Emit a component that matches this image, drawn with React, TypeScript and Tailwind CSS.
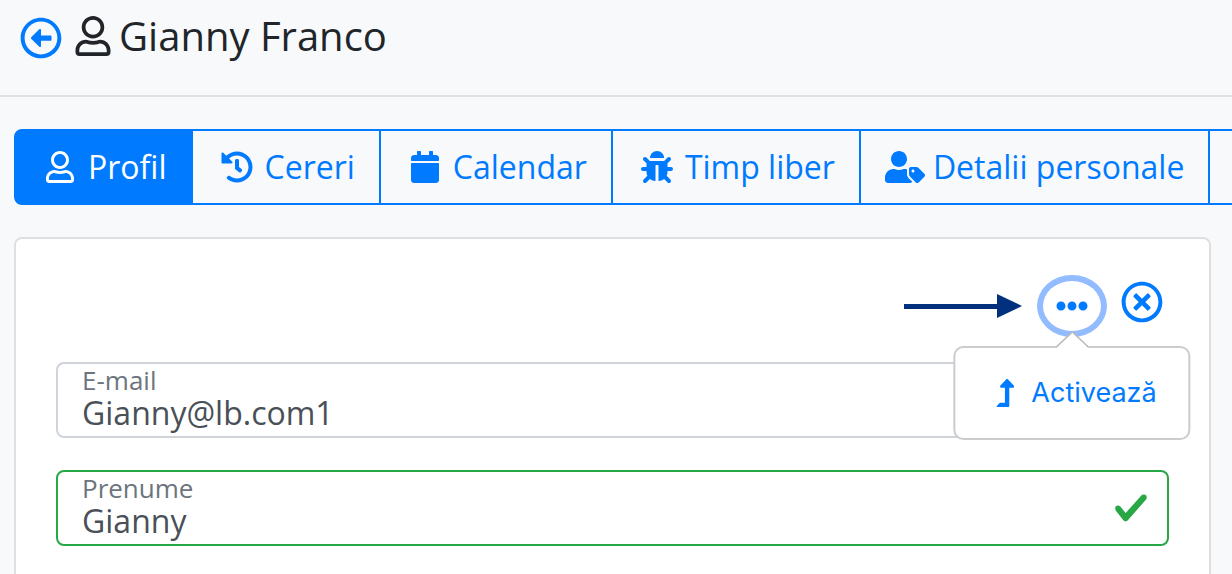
import React from "react";
import {
  FaBug,
  FaCalendar,
  FaEllipsisH,
  FaHistory,
  FaLevelUpAlt,
  FaRegArrowAltCircleLeft,
  FaRegTimesCircle,
  FaRegUser,
  FaUserTag,
} from "react-icons/fa";
import type { IconType } from "react-icons";

interface Tab {
  id: string;
  label: string;
  icon?: IconType;
  wide?: boolean;
}

const TABS: Tab[] = [
  { id: "profile", label: "Profil", icon: FaRegUser },
  { id: "requests", label: "Cereri", icon: FaHistory },
  { id: "calendar", label: "Calendar", icon: FaCalendar },
  { id: "time-off", label: "Timp liber", icon: FaBug },
  { id: "details", label: "Detalii personale", icon: FaUserTag, wide: true },
  { id: "more", label: "" },
];

function TabBar() {
  const [active, setActive] = React.useState("profile");

  return (
    <nav className="flex overflow-hidden pl-[14px]">
      {TABS.map(({ id, label, icon: Icon, wide }) => (
        <button
          key={id}
          type="button"
          aria-label={label || "Mai multe"}
          onClick={() => setActive(id)}
          className={`flex h-[76px] shrink-0 items-center gap-2 border-2 border-[#007bff] px-6 text-[32px] leading-[48px] whitespace-nowrap not-first:-ml-[2px] first:rounded-l-lg ${
            active === id ? "bg-[#007bff] text-white" : "text-[#007bff]"
          }`}
        >
          {Icon && (
            <span className="flex w-10 justify-center">
              <Icon className={wide ? "size-10" : "size-8"} />
            </span>
          )}
          {label}
        </button>
      ))}
    </nav>
  );
}

interface FieldProps {
  id: string;
  label: string;
  type?: string;
  defaultValue: string;
  valid?: boolean;
}

function Field({ id, label, type = "text", defaultValue, valid }: FieldProps) {
  return (
    <div
      className={`flex h-[76px] items-center rounded-lg border-2 bg-white pr-[18px] pl-6 ${
        valid ? "border-[#28a745]" : "border-[#ced4da]"
      }`}
    >
      <div className="flex grow flex-col pt-px">
        <label htmlFor={id} className="text-[26px] leading-7 text-[#6c757d]">
          {label}
        </label>
        <input
          id={id}
          type={type}
          defaultValue={defaultValue}
          className="-mt-[3px] h-11 w-full bg-transparent text-[32px] leading-11 text-[#495057] outline-none"
        />
      </div>
      {valid && (
        <svg viewBox="0 0 8 8" className="size-9 shrink-0" aria-hidden="true">
          <path
            fill="#28a745"
            d="M2.3 6.73L.6 4.53c-.4-1.04.46-1.4 1.1-.8l1.1 1.4 3.4-3.8c.6-.63 1.6-.27 1.2.7l-4 4.6c-.43.5-.8.4-1.1.1z"
          />
        </svg>
      )}
    </div>
  );
}

function ActionsMenu() {
  const [isOpen, setIsOpen] = React.useState(true);

  return (
    <div className="relative">
      <button
        type="button"
        aria-label="Acțiuni"
        aria-expanded={isOpen}
        onClick={() => setIsOpen(!isOpen)}
        className="flex h-[50px] w-[58px] items-center justify-center rounded-[50%] text-[#007bff] shadow-[0_0_0_6px_#92bcff]"
      >
        <FaEllipsisH className="size-8" />
      </button>
      {isOpen && (
        <div className="absolute top-full left-1/2 z-10 mt-[15px] -translate-x-1/2 rounded-[10px] border-2 border-[#cccccc] bg-white px-8 py-6 font-['Inter','Liberation_Sans',sans-serif]">
          {/* Popover arrow */}
          <svg
            viewBox="0 0 32 17"
            className="absolute -top-[17px] left-1/2 h-[17px] w-8 -translate-x-1/2"
            aria-hidden="true"
          >
            <path d="M0 17L16 1l16 16z" fill="#fff" />
            <path d="M0 16L16 1l16 15" fill="none" stroke="#b8b8b8" strokeWidth="1.5" />
          </svg>
          <button
            type="button"
            className="flex items-center gap-2 text-[27px] leading-[42px] whitespace-nowrap text-[#007bff]"
          >
            <span className="flex w-9 justify-center">
              <FaLevelUpAlt className="size-7" />
            </span>
            Activează
          </button>
        </div>
      )}
    </div>
  );
}

export default function App() {
  return (
    <div className="min-h-screen overflow-hidden bg-[#f8f9fb] font-['Open_Sans','Noto_Sans',sans-serif] text-[#212529]">
      <header className="flex h-[97px] items-start border-b-2 border-[#dee2e6] px-5 pt-3">
        <div className="flex h-12 items-center">
          <button type="button" aria-label="Înapoi" className="pt-1 text-[#007bff]">
            <FaRegArrowAltCircleLeft className="size-[42px]" />
          </button>
          <FaRegUser className="mr-[6px] ml-[11px] size-10" />
          <h1 className="text-[40px] leading-[48px]">Gianny Franco</h1>
        </div>
      </header>

      <main className="pt-8">
        <TabBar />

        <section className="mt-8 mr-[21px] ml-[14px] rounded-lg border-2 border-[#dfdfdf] bg-white p-10">
          <div className="mb-[31px] flex items-center justify-end pt-[2px] pr-[6px]">
            <svg viewBox="0 0 118 24" className="mr-[21px] h-6 w-[118px]" aria-hidden="true">
              <path d="M0 10h93V0l25 12-25 12v-9H0z" fill="#00307e" />
            </svg>
            <ActionsMenu />
            <button type="button" aria-label="Închide" className="ml-5 pb-2 text-[#007bff]">
              <FaRegTimesCircle className="size-[42px]" />
            </button>
          </div>

          <form className="flex flex-col gap-8">
            <Field id="email" label="E-mail" type="email" defaultValue="Gianny@lb.com1" />
            <Field id="first-name" label="Prenume" defaultValue="Gianny" valid />
          </form>
        </section>
      </main>
    </div>
  );
}
